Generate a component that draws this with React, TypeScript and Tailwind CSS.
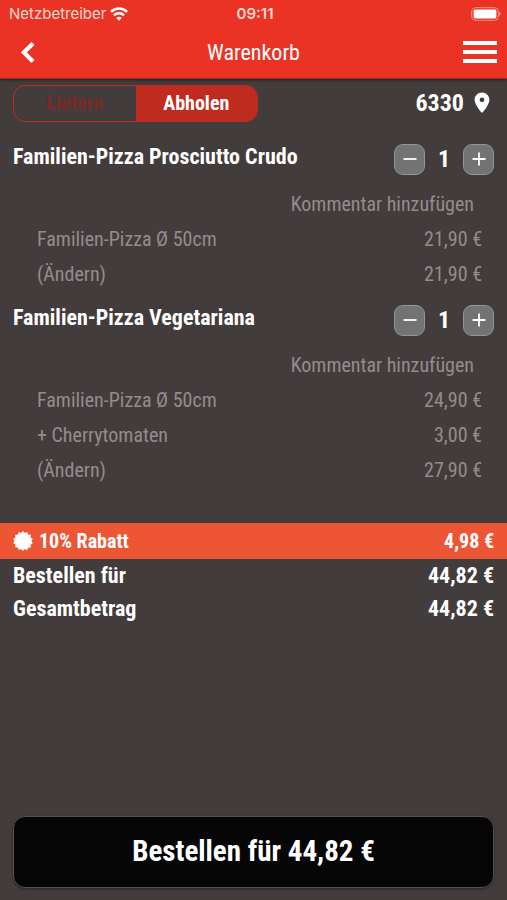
import { useState } from 'react';

type Line = { label: string; price: string; link?: boolean };
type Item = { id: number; name: string; lines: Line[] };

const items: Item[] = [
  {
    id: 1,
    name: 'Familien-Pizza Prosciutto Crudo',
    lines: [
      { label: 'Familien-Pizza Ø 50cm', price: '21,90 €' },
      { label: '(Ändern)', price: '21,90 €', link: true },
    ],
  },
  {
    id: 2,
    name: 'Familien-Pizza Vegetariana',
    lines: [
      { label: 'Familien-Pizza Ø 50cm', price: '24,90 €' },
      { label: '+ Cherrytomaten', price: '3,00 €' },
      { label: '(Ändern)', price: '27,90 €', link: true },
    ],
  },
];

function StatusBar() {
  return (
    <div className="grid h-7 grid-cols-3 items-center pr-1.5 pl-[9px] font-['Inter',sans-serif] text-[15px] text-[#ffd9d0]">
      <div className="flex items-center gap-1">
        <span>Netzbetreiber</span>
        <svg viewBox="0 0 18 14" className="h-3.5 w-[18px] shrink-0" fill="none" stroke="#fff" strokeWidth="2.6">
          <path d="M1 4.800a11.300 11.300 0 0 1 16 0" />
          <path d="M4 8.300a7 7 0 0 1 10 0" />
          <path d="M9 13.800l-2.700-2.800a3.900 3.900 0 0 1 5.400 0z" fill="#fff" stroke="none" />
        </svg>
      </div>
      <span className="text-center font-semibold">09:11</span>
      <svg viewBox="0 0 30 14" className="h-3.5 w-[30px] justify-self-end" fill="none">
        <rect x="0.7" y="0.7" width="26.600" height="12.6" rx="3.8" stroke="#fff" strokeOpacity="0.45" />
        <rect x="2.6" y="2.6" width="22.800" height="8.8" rx="1.600" fill="#fff" />
        <path d="M28.200 4.8c1.8.6 1.8 3.8 0 4.4z" fill="#fff" fillOpacity="0.5" />
      </svg>
    </div>
  );
}

function Stepper() {
  const [count, setCount] = useState(1);
  const button =
    'flex size-[31px] items-center justify-center rounded-[9px] border border-[#959595] bg-[#737373] text-white';

  return (
    <div className="flex shrink-0 items-center">
      <button className={button} aria-label="Weniger" onClick={() => setCount(Math.max(0, count - 1))}>
        <svg viewBox="0 0 14 14" className="size-3.5" stroke="currentColor" strokeWidth="1.8">
          <path d="M0.5 7h13" />
        </svg>
      </button>
      <span className="w-[38px] text-center text-2xl font-bold">{count}</span>
      <button className={button} aria-label="Mehr" onClick={() => setCount(count + 1)}>
        <svg viewBox="0 0 14 14" className="size-3.5" stroke="currentColor" strokeWidth="1.8">
          <path d="M0.5 7h13M7 0.5v13" />
        </svg>
      </button>
    </div>
  );
}

function CartItem({ item }: { item: Item }) {
  return (
    <section className="pb-px">
      <div className="flex h-14 items-center justify-between">
        <h2 className="pb-1 text-[22px] leading-7 font-bold">{item.name}</h2>
        <Stepper />
      </div>
      <div className="text-xl text-[#938c8c]">
        <div className="flex h-[34px] items-center justify-end pr-5">
          <button>Kommentar hinzufügen</button>
        </div>
        {item.lines.map((line) => (
          <div key={line.label} className="flex h-[35px] items-center justify-between pr-3 pl-6">
            {line.link ? <button>{line.label}</button> : <span>{line.label}</span>}
            <span>{line.price}</span>
          </div>
        ))}
      </div>
    </section>
  );
}

export default function App() {
  const [mode, setMode] = useState('abholen');
  const active = 'bg-[#bf2c1f] text-white';
  const inactive = 'text-[#7a2a23]';

  return (
    <div className="flex min-h-screen flex-col bg-[#433c3c] font-['Roboto_Condensed','Liberation_Sans_Narrow','Roboto',sans-serif] text-white">
      <header className="border-b border-[#a42a20] bg-[#eb3325] shadow-[0_1px_3px_#00000080]">
        <StatusBar />
        <div className="flex h-[50px] items-center justify-between px-2.5">
          <button aria-label="Zurück" className="flex w-9 justify-center">
            <svg viewBox="0 0 14 22" className="h-[22px] w-3.5" fill="none" stroke="#fff" strokeWidth="4.2">
              <path d="M12 1.400L2.800 10.400l9.200 9.200" />
            </svg>
          </button>
          <h1 className="text-[22px] leading-7">Warenkorb</h1>
          <button aria-label="Menü" className="flex w-9 justify-end">
            <svg viewBox="0 0 34 24" className="h-6 w-[34px]" fill="#fff">
              <path d="M0 0h34v4H0zM0 9h34v4H0zM0 18h34v4H0z" />
            </svg>
          </button>
        </div>
      </header>

      <main className="flex flex-1 flex-col">
        <div className="flex h-[52px] items-center justify-between px-[13px] pb-1">
          <div className="grid h-[37px] w-[245px] grid-cols-2 overflow-hidden rounded-xl border border-[#bf2c1f] text-xl font-bold">
            <button className={mode === 'liefern' ? active : inactive} onClick={() => setMode('liefern')}>
              Liefern
            </button>
            <button className={mode === 'abholen' ? active : inactive} onClick={() => setMode('abholen')}>
              Abholen
            </button>
          </div>
          <button className="flex items-center gap-1.5 text-2xl font-bold">
            6330
            <svg viewBox="0 0 24 24" className="size-6" fill="#fff">
              <path
                fillRule="evenodd"
                d="M12 1.500C7.900 1.500 4.600 4.800 4.600 8.800c0 5.400 7.400 13.200 7.400 13.200s7.400-7.800 7.400-13.200c0-4-3.300-7.300-7.400-7.300zm0 9.700a2.400 2.400 0 1 1 0-4.800 2.400 2.400 0 0 1 0 4.800z"
              />
            </svg>
          </button>
        </div>

        <div className="px-[13px]">
          {items.map((item) => (
            <CartItem key={item.id} item={item} />
          ))}
        </div>

        <div className="mt-[35px] flex h-9 items-center justify-between bg-[#ec5635] px-[13px] text-xl font-bold">
          <span className="flex items-center gap-1.5">
            <svg viewBox="0 0 20 20" className="size-5" fill="#fff">
              <path d="M10 0l1.800 2.100L14.200.9l.8 2.600 2.800.2-.2 2.700 2.200 1.600-1.400 2 1.400 2.200-2.200 1.600.2 2.700-2.800.2-.8 2.600-2.400-1.200L10 20l-1.800-2.100-2.400 1.200-.8-2.600-2.800-.2.2-2.700L.2 12.200l1.400-2.200L.2 8l2.200-1.600-.2-2.700L5 3.500l.8-2.600 2.400 1.200z" />
            </svg>
            10% Rabatt
          </span>
          <span>4,98 €</span>
        </div>
        <dl className="px-[13px] text-[22px] leading-[33px] font-bold">
          <div className="flex justify-between">
            <dt>Bestellen für</dt>
            <dd>44,82 €</dd>
          </div>
          <div className="flex justify-between">
            <dt>Gesamtbetrag</dt>
            <dd>44,82 €</dd>
          </div>
        </dl>
      </main>

      <footer className="px-[13px] pt-4 pb-3">
        <button className="h-[72px] w-full rounded-xl border border-[#565050] bg-[#060606] text-[29px] font-bold shadow-[0_1px_3px_#00000060]">
          Bestellen für 44,82 €
        </button>
      </footer>
    </div>
  );
}
